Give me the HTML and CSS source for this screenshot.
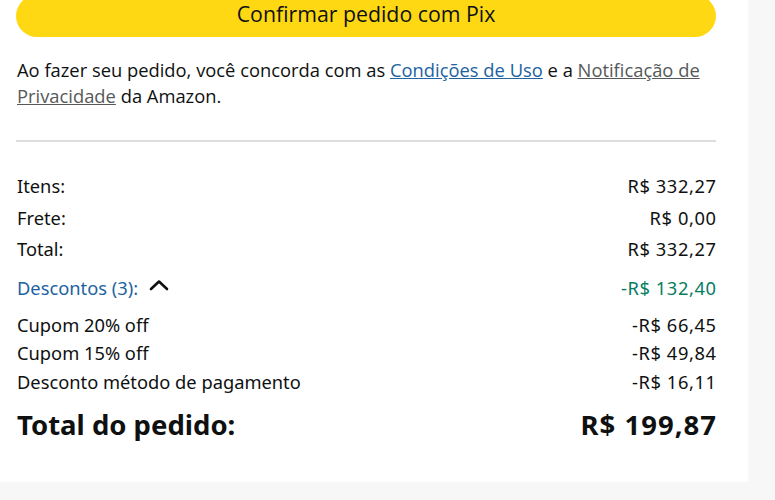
FILE: index.html
```html
<!DOCTYPE html>
<html lang="pt-BR">
<head>
<meta charset="utf-8">
<link rel="stylesheet" href="styles.css">
</head>
<body>
<div class="card">
  <button class="confirm">Confirmar pedido com Pix</button>
  <p class="legal">Ao fazer seu pedido, você concorda com as <a class="link-blue" href="#">Condições de Uso</a> e a <a class="link-grey" href="#">Notificação de Privacidade</a> da Amazon.</p>
  <hr class="divider">
  <div class="summary">
    <div class="row"><span>Itens:</span><span class="val">R$ 332,27</span></div>
    <div class="row"><span>Frete:</span><span class="val">R$ 0,00</span></div>
    <div class="row"><span>Total:</span><span class="val">R$ 332,27</span></div>
    <div class="row discounts">
      <span class="disc-label">Descontos (3): <svg class="chev" viewBox="0 0 20 12" width="20" height="12"><path d="M2 10 L10 2.5 L18 10" fill="none" stroke="#0F1111" stroke-width="2.6" stroke-linecap="round" stroke-linejoin="round"/></svg></span>
      <span class="val green">-R$ 132,40</span>
    </div>
    <div class="details">
      <div class="row small"><span>Cupom 20% off</span><span class="val">-R$ 66,45</span></div>
      <div class="row small"><span>Cupom 15% off</span><span class="val">-R$ 49,84</span></div>
      <div class="row small"><span>Desconto método de pagamento</span><span class="val">-R$ 16,11</span></div>
    </div>
    <div class="row grand"><span>Total do pedido:</span><span class="val">R$ 199,87</span></div>
  </div>
</div>
</body>
</html>
```
FILE: styles.css
```css
html, body {
  margin: 0;
  padding: 0;
  background: #f7f7f7;
}
body {
  width: 775px;
  height: 500px;
  overflow: hidden;
  color: #0F1111;
}
.card {
  width: 748px;
  height: 482px;
  background: #ffffff;
  box-sizing: border-box;
  padding: 0 32px 0 16px;
  overflow: hidden;
}
.confirm {
  display: block;
  width: 100%;
  height: 42px;
  margin-top: -5px;
  border: none;
  border-radius: 21px;
  background: #FFD814;
  color: #0F1111;
  font-family: "Open Sans", sans-serif;
  font-size: 21.3px;
  padding: 0 0 4px 0;
  line-height: 38px;
}
.legal {
  margin: 20px 0 0 1px;
  font-family: "Open Sans", sans-serif;
  font-size: 18.35px;
  line-height: 26px;
}
.link-blue {
  color: #2162A1;
  text-decoration: underline;
}
.link-grey {
  color: #565959;
  text-decoration: underline;
}
.divider {
  border: none;
  border-top: 2px solid #dddddd;
  margin: 31px 0 0 0;
}
.summary {
  margin-top: 28px;
  padding-left: 1px;
  font-family: "Noto Sans", sans-serif;
  font-size: 18.3px;
}
.row {
  display: flex;
  justify-content: space-between;
  align-items: center;
  line-height: 31.5px;
}
.val {
  letter-spacing: 0.6px;
  margin-right: -0.6px;
}
.discounts {
  margin-top: 7.5px;
}
.disc-label {
  color: #2162A1;
  display: flex;
  align-items: center;
  gap: 11px;
}
.chev {
  display: block;
  margin-top: -6px;
}
.green {
  color: #067D62;
}
.details {
  margin-top: 7px;
}
.small {
  line-height: 28.5px;
}
.grand {
  margin-top: 12px;
  line-height: 34px;
  font-size: 27.5px;
  font-weight: 700;
}
.grand .val {
  letter-spacing: 1px;
  margin-right: -1px;
}
```
